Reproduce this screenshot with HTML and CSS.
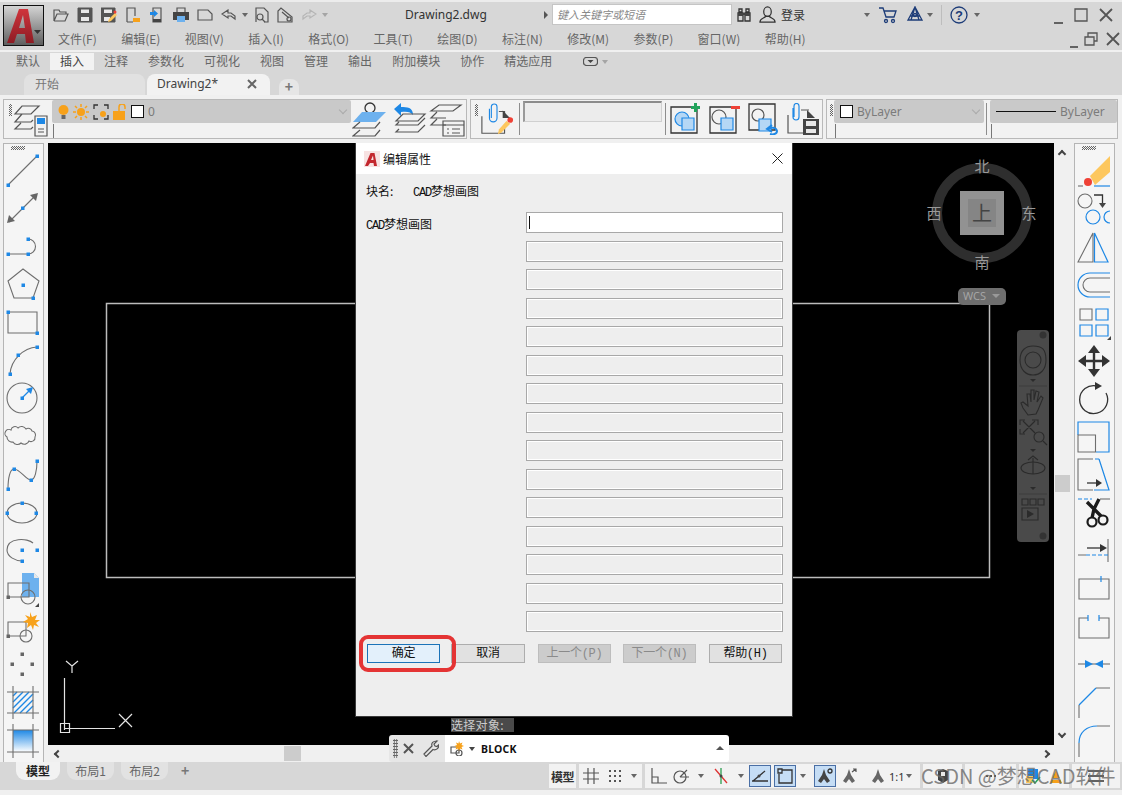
FILE: index.html
```html
<!DOCTYPE html>
<html lang="zh-CN">
<head>
    <meta charset="utf-8" />
    <title>Drawing2.dwg</title>
    <link rel="stylesheet" href="styles.css">
</head>
<body>
<div class="head">
    <div class="appbtn">
        <svg width="39" height="39" viewBox="0 0 39 39"><defs><linearGradient id="ared" x1="0" y1="0" x2="0" y2="1"><stop offset="0" stop-color="#d0343c"/><stop offset="1" stop-color="#8e1c24"/></linearGradient></defs><path fill="url(#ared)" d="M3 37 L15 3 H24 L30 37 H22 L21 28 H13 L10 37Z M15 22 H21 L19 9Z" fill-rule="evenodd"/><path class="tri" d="M30 24h7l-3.500 4z"/></svg>
    </div>
    <div class="headrows">
        <div class="titlerow">
            <div class="qat">
                <svg class="q" viewBox="0 0 16 16"><path class="d" d="M1 14V3h5l1 2h6v2M1 14h11l3-7H4l-3 7"/></svg>
                <svg class="q" viewBox="0 0 16 16"><path class="dk" d="M1 1h14v14H1z"/><path class="wf" d="M4 2.500h8v3.500H4zM4 10h8v4H4z"/></svg>
                <svg class="q" viewBox="0 0 16 16"><path class="dk" d="M0 1h14v14H0z"/><path class="wf" d="M3 2.500h8v3.500H3zM3 10h6v4H3z"/><path class="yf" d="M8 12l6-6 2 2-6 6-3 1z"/><circle class="rf" cx="14" cy="5" r="1.500"/></svg>
                <svg class="q" viewBox="0 0 16 16"><path class="d" d="M2 15V1h8v8M2 15h6"/><path class="of" d="M8 11h7v4H8z"/></svg>
                <svg class="q" viewBox="0 0 16 16"><path class="d" d="M4 1h8v14H4z"/><path class="bf" d="M1 5h4V3l4 3.500L5 10V8H1z"/><path class="dkf" d="M4 12h8v3H4z"/></svg>
                <svg class="q" viewBox="0 0 16 16"><path class="d" d="M4 5V1h8v4"/><path class="dkf" d="M0 5h16v8H0z"/><path class="lbf" d="M4 9h8v6H4z"/></svg>
                <svg class="q" viewBox="0 0 16 16"><path class="d" d="M1 3h10l4 4v6H1z"/></svg>
                <svg class="q" viewBox="0 0 16 16"><path class="d" d="M7 3L1 7l6 4V9h3l4 3V9L10 6H7z"/></svg>
                <span class="drop"></span>
                <svg class="q" viewBox="0 0 16 16"><path class="d" d="M3 15V1h8l4 4v10h-4"/><circle class="d" cx="7" cy="10" r="3"/><path class="d" d="M9 12l3 3"/></svg>
                <svg class="q" viewBox="0 0 16 16"><path class="d" d="M1 15V4l3-3 11 9v5z"/><path class="d" d="M5 5l7 6"/><circle class="d" cx="12" cy="12" r="2"/></svg>
                <svg class="q" viewBox="0 0 16 16"><path class="lt" d="M9 3l6 4-6 4V9H6L2 12V9l4-3h3z"/></svg>
                <span class="drop lite"></span>
                <span class="flow"></span>
            </div>
            <div class="docname">Drawing2.dwg</div>
            <span class="arrow-r"></span>
            <div class="search">键入关键字或短语</div>
            <svg class="binoc" viewBox="0 0 16 16"><path class="dk1" d="M3 2h3v3H3zM10 2h3v3h-3zM2 6h5v8H2zM9 6h5v8H9zM7 7h2"/><path class="dkf" d="M2 6h5v3H2zM9 6h5v3H9z"/></svg>
            <svg class="user" viewBox="0 0 18 18"><ellipse class="dk1" cx="9" cy="6" rx="4" ry="5"/><path class="dk1" d="M1 17c0-4 5-4 6-6h4c1 2 6 2 6 6z"/></svg>
            <span class="login">登录</span>
            <span class="drop login-drop"></span>
            <svg class="cart" viewBox="0 0 18 18"><path class="nv" d="M0 2h4l3 9h8l2-6H5"/><circle class="nv" cx="7" cy="15" r="1.500"/><circle class="nv" cx="14" cy="15" r="1.500"/></svg>
            <svg class="a360" viewBox="0 0 18 18"><path class="nv" d="M9 1l7 13H2z M9 1L5 14M9 1l4 13M4 10h10"/><circle class="nv" cx="9" cy="9" r="1.500"/></svg>
            <span class="drop a360-drop"></span>
            <span class="vsep"></span>
            <svg class="help" viewBox="0 0 18 18"><circle class="nv" cx="9" cy="9" r="8"/><text x="9" y="13.500" class="helpq">?</text></svg>
            <span class="drop help-drop"></span>
            <div class="winbtns">
                <svg viewBox="0 0 12 12" class="win-min"><path class="wb" d="M1 11h9"/></svg>
                <svg viewBox="0 0 14 14" class="win-max"><path class="wb1" d="M1 1h12v12H1z"/></svg>
                <svg viewBox="0 0 14 14" class="win-x"><path class="wb" d="M1 1l12 12M13 1L1 13"/></svg>
            </div>
        </div>
        <div class="menurow">
            <nav class="menu">
                <span>文件(F)</span><span>编辑(E)</span><span>视图(V)</span><span>插入(I)</span><span>格式(O)</span><span>工具(T)</span><span>绘图(D)</span><span>标注(N)</span><span>修改(M)</span><span>参数(P)</span><span>窗口(W)</span><span>帮助(H)</span>
            </nav>
            <div class="docbtns">
                <svg viewBox="0 0 12 12" class="doc-min"><path class="wb" d="M1 11h8"/></svg>
                <svg viewBox="0 0 14 14" class="doc-res"><path class="wb1" d="M1 5h9v8H1zM4 5V1h9v8h-3"/></svg>
                <svg viewBox="0 0 14 14" class="doc-x"><path class="wb" d="M1 1l12 12M13 1L1 13"/></svg>
            </div>
        </div>
    </div>
</div>

<div class="ribbontabs">
    <span>默认</span><span class="on">插入</span><span>注释</span><span>参数化</span><span>可视化</span><span>视图</span><span>管理</span><span>输出</span><span>附加模块</span><span>协作</span><span>精选应用</span>
    <span class="minbtn"><svg width="15" height="9" viewBox="0 0 15 9"><rect class="d" x=".5" y=".5" width="14" height="8" rx="3"/><path class="dkf" d="M4.500 3h6l-3 3z"/></svg><i class="drop lite"></i></span>
</div>
<div class="filetabs">
    <div class="ftab">开始</div>
    <div class="ftab active">Drawing2*<svg class="ftab-x" viewBox="0 0 10 10"><path d="M1 1l8 8M9 1L1 9"/></svg></div>
    <div class="ftab plus">+</div>
</div>

<div class="toolbars">
    <div class="panel layers">
        <span class="grip"></span>
        <svg class="tb-big" viewBox="0 0 36 36"><path class="d" d="M9 4h17l-8 8H2zM9 12l-7 8h16l2-2M8 21l-6 6h16l2-2"/><path class="d" d="M22 14h12v20H22z"/><path class="bf" d="M24 16h8v6h-8z"/><path class="d" d="M25 27h6M25 30h6"/></svg>
        <div class="combo-wrap layer-combo">
            <div class="combo">
                <svg width="11" height="18" viewBox="0 0 11 18"><circle class="of" cx="5.500" cy="7" r="5"/><path class="gf" d="M3.500 12h4v4h-4z"/></svg>
                <svg width="16" height="16" viewBox="0 0 16 16"><circle class="of" cx="8" cy="8" r="4"/><path class="os" d="M8 0v3M8 13v3M0 8h3M13 8h3M2 2l2 2M12 12l2 2M14 2l-2 2M2 14l2-2"/></svg>
                <svg width="16" height="16" viewBox="0 0 16 16"><path class="dk1" d="M1 5V1h4M11 1h4v4M15 11v4h-4M5 15H1v-4"/><circle class="of" cx="10" cy="10" r="3"/></svg>
                <svg width="14" height="16" viewBox="0 0 14 16"><path class="of" d="M0 7h12v9H0z"/><path class="os" d="M6 7V3a3 3 0 0 1 6 0v2"/></svg>
                <span class="swatch"></span>
                <span class="combo-t">0</span>
                <span class="chev"></span>
            </div>
            <div class="combo-foot"></div>
        </div>
        <svg class="tb-big" viewBox="0 0 36 36"><circle class="dk1" cx="18" cy="6" r="5"/><path class="lbf" d="M10 10h24l-10 10H1z"/><path class="d" d="M8 20l-7 6h22l5-6M8 28l-7 6h22l5-6"/></svg>
        <svg class="tb-big" viewBox="0 0 36 36"><path class="bf" d="M1 7l7-6v4c6 0 12 0 12 8-2-3-6-4-12-3v4z"/><path class="d" d="M10 12h22l-7 7H3zM6 20l-3 3h22l7-7M6 27l-3 3h22l7-7"/></svg>
        <svg class="tb-big" viewBox="0 0 36 36"><path class="d" d="M10 3h22l-8 6H2zM8 10l-6 6h15M8 17l-6 6h15"/><path class="d" d="M14 19h21v15H14z"/><path class="d" d="M14 23h21M18 27h2M23 27h8M18 31h2M23 31h8"/></svg>
    </div>
    <div class="panel refs">
        <span class="grip"></span>
        <svg class="tb-big clip" viewBox="0 0 36 36"><path class="b" d="M12 16V4a3 3 0 0 1 6 0v12a4 4 0 0 1-8 0V6"/><path class="d" d="M2 14v18h24V26M20 9h6v4"/><path class="dkf" d="M24 8l8 8h-8z"/><path class="yf" d="M20 28l8-9 4 3-9 9-4 2z"/><circle class="rf" cx="32" cy="18" r="3"/></svg>
        <span class="tbsep"></span>
        <div class="sunken"></div>
        <span class="tbsep"></span>
        <svg class="tb-mid first" viewBox="0 0 32 32"><path class="dk1" d="M1 4h26v26H1z"/><circle class="lbs" cx="12" cy="16" r="7"/><path class="lbs" d="M12 15h12v12H12z"/><path class="gnf" d="M24 0h3v3h3v3h-3v3h-3V6h-3V3h3z"/></svg>
        <svg class="tb-mid" viewBox="0 0 32 32"><path class="dk1" d="M1 4h26v26H1z"/><circle class="d" cx="10" cy="14" r="7"/><path class="lbs" d="M12 15h12v12H12z"/><path class="rf" d="M22 3h9v3h-9z"/></svg>
        <svg class="tb-mid" viewBox="0 0 32 32"><path class="dk1" d="M1 1h26v26H1z"/><circle class="d" cx="10" cy="12" r="6"/><path class="lbs" d="M11 16h12v12H11z"/><path class="bl2" d="M20 26c3-2 8-2 9 2 0 3-4 4-7 3M24 22l-5 4 5 3"/></svg>
        <svg class="tb-mid" viewBox="0 0 32 32"><path class="b" d="M7 14V3a2.500 2.500 0 0 1 5 0v11a3 3 0 0 1-6 0V5"/><path class="d" d="M1 12v18h15M14 7h8"/><path class="dkf" d="M20 7l8 8h-8z"/><path class="dkf" d="M16 16h16v16H16z"/><path class="wf" d="M19 18h10v5H19zM19 26h10v4H19z"/></svg>
    </div>
    <div class="panel props">
        <span class="grip"></span>
        <div class="combo-wrap color-combo">
            <div class="combo"><span class="swatch"></span><span class="combo-t">ByLayer</span><span class="chev"></span></div>
            <div class="combo-foot"></div>
        </div>
        <span class="tbsep"></span>
        <div class="combo-wrap line-combo">
            <div class="combo"><span class="ltline"></span><span class="combo-t">ByLayer</span></div>
            <div class="combo-foot"></div>
        </div>
    </div>
</div>

<div class="main">
    <div class="vbar">
        <span class="grip h"></span>
        <svg class="cell" viewBox="0 0 39 38"><path class="g" d="M4 33L33 4"/><path class="bf" d="M2.500 31.500h3.500v3.500h-3.500zM31.500 2.500h3.500v3.500h-3.500z"/></svg>
        <svg class="cell" viewBox="0 0 39 38"><path class="g" d="M5 32L32 5"/><path class="gf" d="M3 33l2-8 6 6zM34 3l-2 8-6-6z"/><path class="bf" d="M17 16.500h3.500v3.500h-3.500z"/></svg>
        <svg class="cell" viewBox="0 0 39 38"><path class="g" d="M4 26H24M24 11a7.500 7.500 0 0 1 0 15"/><path class="bf" d="M2.500 24.500h3.500v3.500h-3.500zM22.500 24.500h3.500v3.500h-3.500zM22.500 9.500h3.500v3.500h-3.500z"/></svg>
        <svg class="cell" viewBox="0 0 39 38"><path class="g" d="M19 3L35 15 29 32H10L4 15z"/><path class="bf" d="M17.500 17.500h3.500v3.500h-3.500zM27.500 30.500h3.500v3.500h-3.500z"/></svg>
        <svg class="cell" viewBox="0 0 39 38"><path class="g" d="M4 8H33V29H4z"/><path class="bf" d="M2.500 6.500h3.500v3.500h-3.500zM31.500 27.500h3.500v3.500h-3.500z"/></svg>
        <svg class="cell" viewBox="0 0 39 38"><path class="g" d="M6 32C7 18 19 6 33 5"/><path class="bf" d="M4.500 30.500h3.500v3.500h-3.500zM12.500 11.500h3.500v3.500h-3.500zM31.500 3.500h3.500v3.500h-3.500z"/></svg>
        <svg class="cell" viewBox="0 0 39 38"><circle class="g" cx="18" cy="18" r="15"/><path class="b" d="M18 18L26 10"/><path class="bf" d="M16.500 16.500h3.500v3.500h-3.500zM29 7l-2 7-5-5z"/></svg>
        <svg class="cell" viewBox="0 0 39 38"><path class="g" d="M7 12a4 4 0 0 1 7-2a5 5 0 0 1 8 1a4 4 0 0 1 6 2a4 4 0 0 1 3 6a4 4 0 0 1-6 4a5 5 0 0 1-8 2a5 5 0 0 1-8-1a5 5 0 0 1-6-5a4 4 0 0 1 4-7z"/></svg>
        <svg class="cell" viewBox="0 0 39 38"><path class="g" d="M4 33C4 22 6 13 10 13C16 13 22 24 27 24C31 24 33 14 33 5"/><path class="bf" d="M2.500 31.500h3.500v3.500h-3.500zM8.500 11.500h3.500v3.500h-3.500zM25.500 22.500h3.500v3.500h-3.500zM31.500 3.500h3.500v3.500h-3.500z"/></svg>
        <svg class="cell" viewBox="0 0 39 38"><ellipse class="g" cx="18" cy="19" rx="15" ry="10"/><path class="bf" d="M16.500 7.500h3.500v3.500h-3.500zM1.500 17.500h3.500v3.500h-3.500zM30.500 17.500h3.500v3.500h-3.500z"/></svg>
        <svg class="cell" viewBox="0 0 39 38"><path class="g" d="M29 11C24 6 3 5 3 18C3 25 12 29 18 29"/><path class="bf" d="M16.500 16.500h3.500v3.500h-3.500zM31.500 16.500h3.500v3.500h-3.500zM16.500 27.500h3.500v3.500h-3.500z"/></svg>
        <svg class="cell" viewBox="0 0 39 38"><path class="lbf" d="M18 3h12l5 5v19H18z"/><path class="wf" d="M30 3l5 5h-5z"/><path class="g" d="M4 13H25V27H4z"/><circle class="g" cx="24" cy="27" r="7"/><path class="gf" d="M2.500 25.500h3.500v3.500h-3.500z"/><path class="dkf" d="M35 33v4h-4z"/></svg>
        <svg class="cell" viewBox="0 0 39 38"><path class="g" d="M4 14H22V28H4z"/><circle class="g" cx="22" cy="28" r="6"/><path class="gf" d="M2.500 26.500h3.500v3.500h-3.500z"/><path class="of" d="M26 4l2 5 5-2-2 5 5 0-4 3 3 4-5-2-1 5-2-5-4 3 1-5-5-1 5-3-3-4 5 2z"/></svg>
        <svg class="cell" viewBox="0 0 39 38"><path class="gf" d="M16.500 6.500h3.500v3.500h-3.500zM6.500 16.500h3.500v3.500h-3.500zM26.500 16.500h3.500v3.500h-3.500zM16.500 26.500h3.500v3.500h-3.500z"/></svg>
        <svg class="cell" viewBox="0 0 39 38"><path class="hatch" d="M9 12L13 8M9 18L19 8M9 24L25 8M10 29L29 10M16 29L29 16M22 29L29 22"/><path class="g" d="M3 8H35M3 29H35M9 2V35M29 2V35"/></svg>
        <svg class="cell" viewBox="0 0 39 38"><defs><linearGradient id="grad" x1="0" y1="0" x2="0" y2="1"><stop offset="0" stop-color="#1e88e5"/><stop offset="1" stop-color="#fff"/></linearGradient></defs><path fill="url(#grad)" d="M9 8H29V30H9z"/><path class="g" d="M3 8H35M3 30H35M9 2V36M29 2V36"/></svg>
    </div>

    <div class="center">
        <div class="viewrow">
            <div class="canvas">
                <svg class="drawing" viewBox="0 0 1006 602"><path class="rectline" d="M58.500 160.500H941.500V434.500H58.500z"/><path class="ucs" d="M16.500 587V535M16.500 585.500H67M12.500 580.500h9v9h-9zM24 530v-7l-6-5M24 523l6-5M71 571l13 13M84 571l-13 13"/></svg>
                <div class="cube">
                    <div class="ring"></div>
                    <div class="face"><span>上</span></div>
                    <span class="dir n">北</span><span class="dir s">南</span><span class="dir w">西</span><span class="dir e">东</span>
                </div>
                <div class="wcs">WCS<i></i></div>
                <div class="navbar">
                    <svg width="32" height="212" viewBox="0 0 32 212"><circle class="nb-dot" cx="26" cy="5" r="3.500"/><path class="nb" d="M3 30c0-10 6-14 13-14 9 0 13 3 13 14 0 10-6 15-13 15S3 40 3 30z"/><circle class="nb" cx="16" cy="30" r="8"/><path class="nb-f" d="M13 49h6l-3 3z"/><path class="nb-l" d="M2 56h28"/><path class="nb" d="M6 78l-2-5 2-1 5 4-1-12 3 0 1 8V60h3v10l2-9 3 1-2 10 4-6 2 2-5 12-2 4-8 1z"/><path class="nb" d="M6 91l12 12M18 91L6 103M3 95v-5h5M15 90h6v5M3 99v5h5"/><circle class="nb" cx="22" cy="107" r="5"/><path class="nb" d="M26 111l4 4"/><path class="nb-f" d="M13 119h6l-3 3z"/><path class="nb" d="M16 128v16M11 130l5-4 5 4"/><ellipse class="nb" cx="16" cy="138" rx="12" ry="6"/><path class="nb-f" d="M13 157h6l-3 3z"/><path class="nb-l" d="M2 164h28"/><path class="nb" d="M5 169h6v6H5zM13 169h6v6h-6zM21 169h6v6h-6zM5 178h16v12H5z"/><path class="nb-f" d="M10 180l7 4-7 4z"/><circle class="nb-dot" cx="26" cy="206" r="3.500"/></svg>
                </div>
            </div>
            <div class="vscroll">
                <i class="chevron up"></i><span class="vthumb"></span><i class="chevron down"></i>
            </div>
        </div>
        <div class="hscroll">
            <i class="chevron left"></i><span class="hthumb"></span><i class="chevron right"></i>
        </div>

        <div class="dialog">
            <div class="dlg-title">
                <svg width="16" height="16" viewBox="0 0 16 16"><path class="pale" d="M0 0h16v16H0z"/><path class="rf2" d="M1 15L6.500 2h4L13 15h-3l-.500-3H6l-2 3zM7 9h2.500L9 4.500z" fill-rule="evenodd"/></svg>
                <span>编辑属性</span>
                <svg class="dlg-x" viewBox="0 0 11 11"><path d="M.5.5l10 10M10.500.5l-10 10"/></svg>
            </div>
            <div class="dlg-body">
                <div class="blockname"><span class="lbl">块名:</span><span><span class="lat">CAD</span>梦想画图</span></div>
                <div class="fields">
                    <div class="flabel"><span class="lat">CAD</span>梦想画图</div>
                    <div class="inputs">
                        <div class="field cur"><i></i></div>
                        <div class="field"></div><div class="field"></div><div class="field"></div><div class="field"></div>
                        <div class="field"></div><div class="field"></div><div class="field"></div><div class="field"></div>
                        <div class="field"></div><div class="field"></div><div class="field"></div><div class="field"></div>
                        <div class="field"></div><div class="field"></div>
                    </div>
                </div>
                <div class="btns">
                    <button class="btn ok">确定</button>
                    <button class="btn cancel">取消</button>
                    <button class="btn off">上一个(P)</button>
                    <button class="btn off next">下一个(N)</button>
                    <button class="btn">帮助(H)</button>
                </div>
            </div>
            <div class="redbox"></div>
        </div>

        <div class="prompt">选择对象:</div>
        <div class="cmdline">
            <div class="cmd-left">
                <span class="cmd-grip"></span>
                <svg width="11" height="11" viewBox="0 0 11 11"><path class="cmdx" d="M1 1l9 9M10 1l-9 9"/></svg>
                <svg class="wrench" width="16" height="17" viewBox="0 0 16 17"><path class="d" d="M1 14l8-8c-1-3 1-5 5-5l-3 3 1 2 2 .500 2-2c0 4-3 6-6 5l-7 7z"/></svg>
            </div>
            <div class="cmd-main">
                <svg width="15" height="15" viewBox="0 0 15 15"><path class="d" d="M1 6h8v6H1z"/><circle class="d" cx="9" cy="12" r="3"/><path class="of" d="M9 0l1 2.500 2.500-1-1 2.500 2.500 1-2.500 1 1 2.500-2.500-1-1 2.500-1-2.500-2.500 1 1-2.500L4.500 5 7 4 6 1.500l2.500 1z"/></svg>
                <span class="drop dark"></span>
                <span class="cmd-text">BLOCK</span>
                <span class="cmd-up"></span>
            </div>
        </div>
    </div>

    <div class="vbar right">
        <span class="grip h"></span>
        <svg class="cell" viewBox="0 0 39 38"><path class="yf" d="M15 24L35 4V20L20 33z"/><circle class="rf" cx="13" cy="30" r="4"/><path class="g" d="M3 34H8"/><path class="b" d="M19 34H35"/></svg>
        <svg class="cell" viewBox="0 0 39 38"><circle class="g" cx="10" cy="11" r="7"/><path class="dk1" d="M19 5H27.500V13"/><path class="dkf" d="M24 13h7l-3.500 5z"/><circle class="b" cx="18" cy="27" r="7"/><path class="b" d="M35 33a6 6 0 1 1 0-12"/></svg>
        <svg class="cell" viewBox="0 0 39 38"><path class="g" d="M3 34L18 5V34z"/><path class="b" d="M19.500 5L33 34H19.500z"/></svg>
        <svg class="cell" viewBox="0 0 39 38"><path class="b" d="M35 7H15a12 12 0 0 0 0 24H35"/><path class="g" d="M35 12H15a7 7 0 0 0 0 14H35"/></svg>
        <svg class="cell" viewBox="0 0 39 38"><path class="g" d="M5 5H17V16H5z"/><path class="b" d="M21 5H33V16H21zM5 21H17V32H5zM21 21H33V32H21z"/><path class="dkf" d="M36 32v4h-4z"/></svg>
        <svg class="cell" viewBox="0 0 39 38"><path class="thick" d="M19 6V32M6 19H32"/><path class="dkf2" d="M19 3l6 8H13zM19 35l6-8H13zM3 19l8-6v12zM35 19l-8-6v12z"/></svg>
        <svg class="cell" viewBox="0 0 39 38"><path class="dk1" d="M22 6A14 14 0 1 0 31 13"/><path class="dkf2" d="M20 2v8l7-4z"/></svg>
        <svg class="cell" viewBox="0 0 39 38"><path class="b" d="M3 17V4H34V34H21"/><path class="g" d="M3 17H20.500V34H3z"/></svg>
        <svg class="cell" viewBox="0 0 39 38"><path class="g" d="M18 3H3V34H18"/><path class="b" d="M24 3L34 34H19M20 3H24"/><path class="dk1" d="M12 27H22"/><path class="dkf2" d="M21 23l6 4-6 4z"/></svg>
        <svg class="cell" viewBox="0 0 39 38"><path class="dash" d="M3 5H17"/><path class="g" d="M25 5H35"/><path class="sc" d="M12 8L26 22M24 5L19 15L17 24"/><circle class="sc2" cx="17" cy="28" r="4.500"/><circle class="sc2" cx="28" cy="26" r="4.500"/></svg>
        <svg class="cell" viewBox="0 0 39 38"><path class="g" d="M33 7V30M3 23H11"/><path class="dash" d="M11 23H33"/><path class="dk1" d="M12 16H26"/><path class="dkf2" d="M25 12l7 4-7 4z"/></svg>
        <svg class="cell" viewBox="0 0 39 38"><path class="g" d="M26 9H34V29H4V9H26"/><path class="b" d="M26 6V12"/></svg>
        <svg class="cell" viewBox="0 0 39 38"><path class="g" d="M13 10H4V30H34V10H24"/><path class="b" d="M13 7V13M24 7V13"/></svg>
        <svg class="cell" viewBox="0 0 39 38"><path class="g" d="M3 18H35"/><path class="bf" d="M10 14l8 4-8 4zM28 14l-8 4 8 4z"/></svg>
        <svg class="cell" viewBox="0 0 39 38"><path class="b" d="M4 21L21 4"/><path class="g" d="M21 4H35M4 21V34"/></svg>
        <svg class="cell" viewBox="0 0 39 38"><path class="b" d="M4 21C4 10 12 4 22 4"/><path class="g" d="M22 4H35M4 21V35"/></svg>
    </div>
</div>

<div class="statusrow">
    <div class="ltabs">
        <span class="ltab on">模型</span><span class="ltab">布局1</span><span class="ltab">布局2</span><span class="ltab-add">+</span>
    </div>
    <div class="sbar">
        <div class="sbox model">模型</div>
        <div class="sbox s-grid">
            <svg class="si" viewBox="0 0 16 16"><path class="d" d="M5 0v16M11 0v16M0 5h16M0 11h16"/></svg>
            <svg class="si" viewBox="0 0 16 16"><path class="dots" d="M2 2h2v2H2zM7 2h2v2H7zM12 2h2v2h-2zM2 7h2v2H2zM7 7h2v2H7zM12 7h2v2h-2zM2 12h2v2H2zM7 12h2v2H7zM12 12h2v2h-2z"/></svg>
            <span class="drop"></span>
        </div>
        <div class="sbox s-draft">
            <svg class="si" viewBox="0 0 16 16"><path class="d" d="M1 0v15h15M1 9h6v6"/></svg>
            <svg class="si" viewBox="0 0 16 16"><circle class="d" cx="7" cy="9" r="6"/><path class="d" d="M7 9l7-7M7 9h9"/></svg>
            <span class="drop"></span>
            <svg class="si" viewBox="0 0 16 16"><path class="rl" d="M2 1l12 14"/><path class="gl" d="M8 0v16"/><circle class="dkf" cx="8" cy="8" r="1.500"/></svg>
            <span class="drop"></span>
            <span class="sbtn s1"><svg class="si" viewBox="0 0 16 16"><path class="dk1" d="M0 13h16M1 13L13 3"/><circle class="dkf" cx="7" cy="8" r="1.500"/></svg></span>
            <span class="sbtn s2"><svg class="si" viewBox="0 0 16 16"><path class="dk1" d="M5 2h10v13H2V6"/><path class="dk1" d="M1 1h4v4H1z"/></svg></span>
            <span class="drop"></span>
            <span class="sbtn anno"><svg class="si" viewBox="0 0 16 16"><path class="dkf" d="M7 1l2 6 4 6-3 2-3-4-3 4-3-2 4-6z"/><circle class="dk1" cx="13" cy="3" r="2"/></svg></span>
            <svg class="si" viewBox="0 0 16 16"><path class="gf" d="M7 1l2 6 4 6-3 2-3-4-3 4-3-2 4-6z"/><path class="d" d="M10 4l4-3M11 1h3v3"/></svg>
            <svg class="si anno3" viewBox="0 0 16 16"><path class="gf" d="M8 1l2 6 4 6-3 2-3-4-3 4-3-2 4-6z"/></svg>
            <span class="scale">1:1</span>
            <span class="drop"></span>
        </div>
        <div class="sbox s-tail">
            <svg class="si" viewBox="0 0 16 16"><path class="dkf" d="M3 3l5-2 5 2v9l-5 3-5-3z"/><path class="wf" d="M6 4h4v4H6z"/></svg>
        </div>
        <div class="sbox s-mid">
            <svg class="si" viewBox="0 0 16 16"><path class="dots" d="M3 7h2v2H3zM7 7h2v2H7zM11 7h2v2h-2z"/></svg>
        </div>
        <div class="sbox s-tail2">
            <svg class="si" viewBox="0 0 16 16"><path class="bf" d="M3 1h10v10H3z"/><path class="yf" d="M1 8h7v7H1z"/><path class="gn" d="M7 12l3 3 5-6"/></svg>
            <svg class="si" viewBox="0 0 16 16"><path class="of" d="M8 2l6 13H2z"/><path class="wf" d="M4 10h8v2H4z"/></svg>
        </div>
        <div class="sbox s-menu"><svg class="si" viewBox="0 0 16 16"><path class="dk1" d="M0 3h16M0 8h16M0 13h16"/></svg></div>
    </div>
    <div class="watermark">CSDN @梦想CAD软件</div>
</div>
</body>
</html>
```
FILE: styles.css
```css
* { box-sizing: border-box; }
html, body { margin: 0; padding: 0; }
body {
    width: 1122px; height: 795px; overflow: hidden;
    background: #f0f0f0; color: #555;
    font: 12px "Noto Sans CJK SC", "Noto Sans", sans-serif;
    border-top: 2px solid #ececec;
    position: relative;
}
svg { display: block; flex: none; }
i { display: block; }

/* shared icon paints */
.d { fill: none; stroke: #555; stroke-width: 1.2; }
.dk { fill: #555; stroke: #555; }
.dk1 { fill: none; stroke: #333; stroke-width: 1.3; }
.dkf { fill: #444; }
.dkf2 { fill: #333; }
.wf { fill: #e8e8e8; }
.yf { fill: #fdc75e; }
.rf { fill: #ef4136; }
.of { fill: #f7a11a; }
.os { fill: none; stroke: #f7a11a; stroke-width: 1.5; }
.bf { fill: #1e88e5; }
.lbf { fill: #6db1ee; }
.lbs { fill: #b5d7f5; stroke: #1e88e5; stroke-width: 1.2; }
.gf { fill: #666; }
.gnf { fill: #22a35b; }
.gn { fill: none; stroke: #22a35b; stroke-width: 1.5; }
.lt { fill: none; stroke: #b5b5b5; stroke-width: 1.2; }
.nv { fill: none; stroke: #1d3c78; stroke-width: 1.3; }
.g { fill: none; stroke: #6e6e6e; stroke-width: 1.1; }
.b { fill: none; stroke: #1e88e5; stroke-width: 1.2; }
.bl2 { fill: none; stroke: #1e88e5; stroke-width: 2; }
.dash { fill: none; stroke: #1e88e5; stroke-width: 1.2; stroke-dasharray: 4 2; }
.hatch { fill: none; stroke: #1e88e5; stroke-width: 1.4; }
.thick { fill: none; stroke: #333; stroke-width: 2.4; }
.sc { fill: none; stroke: #1b1b1b; stroke-width: 3.4; }
.sc2 { fill: none; stroke: #1b1b1b; stroke-width: 2.2; }
.dots { fill: #555; }
.rl { fill: none; stroke: #d33; stroke-width: 1.3; }
.gl { fill: none; stroke: #2a9d4f; stroke-width: 1.3; }
.pale { fill: #f7e2e2; }
.rf2 { fill: #c3272e; }
.tri { fill: #333; }

.drop {
    display: inline-block; width: 0; height: 0; flex: none;
    border-left: 3.5px solid transparent; border-right: 3.5px solid transparent;
    border-top: 4px solid #666;
}
.drop.lite { border-top-color: #a5a5a5; }
.drop.dark { border-top-color: #444; }

/* title + menu rows */
.head { display: flex; height: 48px; background: #d7d7d7; padding-left: 3px; }
.appbtn {
    width: 41px; height: 41px; margin-top: 3px; flex: none;
    border: 1px solid #111;
    background: linear-gradient(#d4d4d4, #5f5f5f);
}
.headrows { flex: 1; min-width: 0; }
.titlerow { display: flex; align-items: center; height: 25px; position: relative; }
.qat { display: flex; align-items: center; gap: 8px; margin-left: 9px; width: 328px; height: 25px; flex: none; }
.q { width: 16px; height: 16px; }
.qat .drop { margin: 0 -3px; }
.docname { margin-left: 24px; font-size: 12px; font-family: "Noto Sans", sans-serif; color: #333; width: 132px; flex: none; }
.arrow-r { width: 0; height: 0; margin-left: 7px; border-left: 4px solid #555; border-top: 4px solid transparent; border-bottom: 4px solid transparent; flex: none; }
.search {
    width: 180px; height: 21px; margin-left: 4px; padding-left: 4px; flex: none;
    background: #fff; border: 1px solid #c5c5c5;
    font-size: 11px; font-style: italic; color: #888; line-height: 19px;
}
.binoc { width: 16px; height: 16px; margin-left: 4px; }
.user { width: 17px; height: 17px; margin-left: 7px; }
.login { margin-left: 5px; color: #333; width: 83px; flex: none; }
.login-drop { margin-left: 0; }
.cart { width: 18px; height: 18px; margin-left: 9px; }
.a360 { width: 18px; height: 18px; margin-left: 9px; }
.a360-drop { margin-left: 3px; }
.vsep { width: 1px; height: 20px; background: #bdbdbd; margin-left: 8px; flex: none; }
.help { width: 18px; height: 18px; margin-left: 8px; }
.helpq { font: bold 13px "Liberation Sans", sans-serif; text-anchor: middle; fill: #1d3c78; }
.help-drop { margin-left: 6px; }
.winbtns { display: flex; align-items: center; margin-left: 73px; }
.win-min { width: 12px; height: 12px; margin-top: 6px; }
.win-max { width: 14px; height: 14px; margin-left: 9px; }
.win-x { width: 14px; height: 14px; margin-left: 11px; }
.wb { fill: none; stroke: #555; stroke-width: 1.8; }
.wb1 { fill: none; stroke: #555; stroke-width: 1.3; }
.menurow { display: flex; align-items: center; height: 23px; position: relative; }
.menu { display: flex; gap: 24.4px; margin-left: 14px; color: #666; width: 1011px; flex: none; }
.docbtns { display: flex; align-items: center; margin-left: 0; }
.doc-min { width: 12px; height: 12px; margin-top: 6px; }
.doc-res { width: 14px; height: 14px; margin-left: 3px; }
.doc-x { width: 14px; height: 14px; margin-left: 8px; }

/* ribbon */
.ribbontabs {
    display: flex; align-items: flex-end; height: 23px;
    background: #d7d7d7; padding-left: 6px;
    border-top: 2px solid #f0f0f0; color: #666;
}
.ribbontabs span { padding: 0 10px; height: 17px; line-height: 16px; margin-bottom: 3px; }
.ribbontabs .on { background: #f2f2f2; color: #444; }
.ribbontabs .minbtn { display: flex; align-items: center; gap: 4px; margin-left: 11px; padding: 0 10px; }
.filetabs { display: flex; align-items: flex-end; height: 22px; padding-left: 24px; background: #d7d7d7; }
.ftab {
    width: 121px; height: 21px; padding-left: 11px; line-height: 20px;
    background: #e1e1e1; color: #777;
    border-radius: 8px 8px 0 0;
}
.ftab.active {
    width: 123px; padding-left: 10px; margin-left: 2px;
    background: #f2f2f2; color: #444;
    font-family: "Noto Sans", sans-serif; position: relative;
}
.ftab-x { position: absolute; right: 13px; top: 5px; width: 10px; height: 10px; fill: none; stroke: #666; stroke-width: 2; }
.ftab.plus {
    width: 20px; height: 16px; margin-left: 9px; padding: 0;
    text-align: center; line-height: 15px; font-weight: bold; font-size: 14px;
    background: #e6e6e6; color: #777;
}

/* toolbars */
.toolbars { display: flex; height: 40px; margin-top: 4px; padding-left: 3px; gap: 3px; }
.panel {
    display: flex; height: 40px; flex: none;
    background: #f2f2f2; border: 1px solid #b9b9b9;
    position: relative;
}
.grip {
    width: 3px; height: 12px; margin: 4px 1px 0 3px; flex: none;
    background: repeating-conic-gradient(#666 0 25%, transparent 0 50%) 0 0 / 2px 2px;
}
.grip.h { display: block; width: 14px; height: 4px; margin: 2px 0 2px 7px; }
.tb-big { width: 36px; height: 36px; margin: 2px 0 0 0; }
.layers { width: 464px; padding-left: 2px; }
.layer-combo { width: 299px; margin: 0 1px 0 3px; flex: none; }
.layer-combo + .tb-big { margin-right: 5px; }
.combo-wrap { height: 100%; }
.combo {
    display: flex; align-items: center; gap: 4px; height: 23px; padding: 0 6px;
    background: #c9c9c9; border-radius: 2px; color: #7b7b7b; position: relative;
}
.combo-foot { margin: 1px 0 0 1px; height: 14px; border-left: 1px solid #777; }
.swatch { width: 13px; height: 13px; background: #fff; border: 1px solid #111; flex: none; }
.combo-t { font: 12px "Noto Sans", sans-serif; color: #7b7b7b; }
.chev {
    position: absolute; right: 5px; top: 7px; width: 6px; height: 6px;
    border-right: 1px solid #aaa; border-bottom: 1px solid #aaa; transform: rotate(45deg);
}
.refs { width: 353px; padding-left: 1px; }
.refs .clip { width: 34px; height: 34px; margin: 3px 5px 0 1px; }
.tbsep { width: 1px; height: 32px; background: #8d8d8d; margin-top: 3px; flex: none; }
.sunken { width: 139px; height: 21px; margin: 1px 3px 0 3px; flex: none; background: #ececec; border: 1px solid #d0d0d0; border-top: 2px solid #8c8c8c; border-left: 2px solid #9a9a9a; }
.tb-mid { width: 32px; height: 32px; margin: 3px 3px 0 4px; }
.props { flex: 1; margin-right: 5px; }
.color-combo { width: 150px; margin: 0 2px 0 0; flex: none; }
.line-combo { width: 127px; margin: 0 0 0 3px; flex: none; }
.ltline { width: 60px; height: 1px; background: #111; flex: none; }

/* main area */
.main { display: flex; height: 619px; margin-top: 4px; padding-left: 3px; position: relative; }
.vbar { width: 41px; height: 619px; background: #f5f5f5; border: 1px solid #b5b5b5; border-width: 1px 1px 0; flex: none; }
.vbar.right { margin-left: 4px; }
.cell { width: 39px; height: 38px; overflow: visible; }
.center { width: 1022px; margin-left: 4px; flex: none; position: relative; }
.viewrow { display: flex; height: 602px; }
.canvas { width: 1006px; height: 602px; background: #000; position: relative; overflow: hidden; }
.drawing { position: absolute; left: 0; top: 0; width: 1006px; height: 602px; }
.rectline { fill: none; stroke: #bcbcbc; stroke-width: 1.5; }
.ucs { fill: none; stroke: #e4e4e4; stroke-width: 1.2; }

.cube { position: absolute; left: 878px; top: 15px; width: 112px; height: 112px; }
.ring { position: absolute; left: 6px; top: 5px; width: 100px; height: 100px; border: 10px solid #2e2e2e; border-radius: 50%; }
.face {
    position: absolute; left: 34px; top: 33px; width: 44px; height: 44px;
    background: #929292; padding: 8px;
}
.face span {
    display: block; width: 28px; height: 28px; background: #858585;
    color: #444; font-size: 20px; line-height: 27px; text-align: center;
}
.dir { position: absolute; color: #999; font-size: 15px; line-height: 18px; width: 18px; text-align: center; }
.dir.n { left: 47px; top: -1px; }
.dir.s { left: 47px; top: 95px; }
.dir.w { left: -1px; top: 46px; }
.dir.e { left: 94px; top: 46px; }
.wcs {
    position: absolute; left: 910px; top: 145px; width: 48px; height: 17px;
    background: #6e6e6e; border-radius: 5px; padding-left: 5px;
    color: #a5a5a5; font: 11px/16px "Noto Sans", sans-serif;
}
.wcs i {
    position: absolute; right: 6px; top: 6px;
    border-left: 4px solid transparent; border-right: 4px solid transparent; border-top: 4px solid #999;
}
.navbar { position: absolute; left: 969px; top: 187px; width: 32px; height: 212px; background: #4a4a4a; border-radius: 4px; }
.nb { fill: none; stroke: #2b2b2b; stroke-width: 1.1; }
.nb-l { fill: none; stroke: #3c3c3c; stroke-width: 1; }
.nb-f { fill: #2b2b2b; }
.nb-dot { fill: #333; }

.vscroll { width: 16px; height: 602px; position: relative; background: #f0f0f0; }
.vthumb { position: absolute; left: 1px; top: 332px; width: 15px; height: 17px; background: #ccc; }
.hscroll { height: 17px; position: relative; background: #f0f0f0; }
.hthumb { position: absolute; left: 236px; top: 1px; width: 17px; height: 15px; background: #ccc; }
.chevron {
    position: absolute; width: 6px; height: 6px;
    border: solid #444; border-width: 2px 0 0 2px;
}
.chevron.up { left: 5px; top: 8px; transform: rotate(45deg); }
.chevron.down { left: 5px; top: 588px; transform: rotate(225deg); }
.chevron.left { left: 7px; top: 6px; transform: rotate(-45deg); }
.chevron.right { left: 995px; top: 6px; transform: rotate(135deg); }

/* dialog */
.dialog {
    position: absolute; left: 307px; top: 0; width: 438px; height: 574px;
    background: #eee; border: solid #3a3a3a; border-width: 0 1px 1px; color: #111;
    font-family: "Noto Sans CJK SC", sans-serif;
}
.dlg-title {
    display: flex; align-items: center; gap: 3px; height: 31px; padding-left: 8px;
    background: #fff; position: relative;
}
.dlg-x { position: absolute; right: 9px; top: 10px; width: 11px; height: 11px; fill: none; stroke: #222; stroke-width: 1; }
.dlg-body { padding: 0 9px 0 10px; }
.lat { font: 12px "Liberation Mono", monospace; letter-spacing: -1.2px; }
.blockname { display: flex; height: 17px; margin-top: 8px; line-height: 17px; }
.blockname .lbl { width: 47px; }
.fields { display: flex; margin-top: 13px; }
.flabel { width: 160px; line-height: 17px; margin-top: 3px; }
.inputs { display: grid; gap: 7.5px; width: 257px; }
.field {
    height: 21px; border: 1px solid #a8a8a8; background: #eee;
    box-shadow: inset 0 0 0 1px #fff;
}
.field.cur { background: #fff; box-shadow: none; padding: 3px 2px; }
.field.cur i { width: 1px; height: 13px; background: #111; }
.btns { display: flex; margin: 12px 0 0 1px; }
.btn {
    height: 19px; width: 73px; padding: 0; margin: 0 13px 0 0; flex: none;
    background: #e1e1e1; border: 1px solid #adadad; color: #111;
    font: 12px/16px "Liberation Mono", "Noto Sans CJK SC", monospace; letter-spacing: -.3px;
}
.btn.ok { background: #e3f0fb; border-color: #1b73b8; margin-right: 11px; }
.btn.cancel { width: 74px; }
.btn.off { background: #ccc; border-color: #bdbdbd; color: #8a8a8a; margin-right: 12px; }
.btn.off.next { margin-right: 13px; }
.btn:last-child { margin-right: 0; }
.redbox {
    position: absolute; left: 3px; top: 492px; width: 97px; height: 37px;
    border: 4px solid #e43434; border-radius: 9px;
}

.prompt {
    position: absolute; left: 403px; top: 575px; width: 63px; height: 14px;
    background: #4a4a4a; color: #ccc; line-height: 14px; letter-spacing: 0.3px; white-space: nowrap;
}
.cmdline {
    position: absolute; left: 341px; top: 592px; width: 340px; height: 27px;
    display: flex; border-radius: 3px; overflow: hidden;
}
.cmd-left { display: flex; align-items: center; width: 56px; background: #e6e6e6; padding-left: 4px; gap: 5px; flex: none; }
.cmd-grip { width: 5px; height: 19px; flex: none; background: radial-gradient(circle, #666 1px, transparent 1.1px) 0 0 / 2.500px 3px; }
.cmdx { fill: none; stroke: #555; stroke-width: 2; }
.wrench { margin-left: 4px; }
.cmd-main { flex: 1; display: flex; align-items: center; gap: 4px; padding-left: 5px; background: #fff; position: relative; }
.cmd-text { font: bold 10.500px "Noto Sans", sans-serif; color: #111; margin-left: 2px; letter-spacing: .2px; }
.cmd-up {
    position: absolute; right: 5px; top: 11px;
    border-left: 4px solid transparent; border-right: 4px solid transparent; border-bottom: 4px solid #555;
}

/* bottom */
.statusrow { display: flex; height: 28px; background: #d7d7d7; position: relative; }
.ltabs { display: flex; width: 549px; padding-left: 16px; height: 18px; flex: none; }
.ltab { width: 47px; height: 18px; text-align: center; line-height: 17px; color: #666; background: #e2e2e2; border-radius: 0 0 9px 9px; margin-right: 7px; }
.ltab.on { background: #f2f2f2; color: #222; font-weight: bold; width: 44px; }
.ltab-add { font-size: 14px; font-weight: bold; color: #777; margin-left: 6px; line-height: 16px; }
.sbar { display: flex; gap: 3px; padding-top: 2px; height: 26px; }
.sbox { display: flex; align-items: center; gap: 8px; height: 24px; background: #f2f2f2; padding: 0 4px; flex: none; }
.si { width: 16px; height: 16px; }
.model { width: 27px; padding: 0; font-weight: bold; color: #333; justify-content: center; letter-spacing: -.5px; }
.s-grid { width: 63px; }
.s-draft { width: 275px; gap: 6px; padding-left: 6px; }
.s-draft .drop { margin: 0 3px; }
.sbtn {
    display: flex; align-items: center; justify-content: center;
    width: 22px; height: 22px; background: #c5ddf5; border: 1px solid #4a6fa5; flex: none;
}
.s1 { margin-left: -4px; }
.s2 { margin-left: -3px; }
.s-draft .s2 + .drop { margin-left: -2px; }
.anno { margin-left: -1px; }
.anno3 { margin-left: 6px; }
.scale { font: 11px "Noto Sans", sans-serif; color: #333; margin-left: -3px; width: 14px; flex: none; white-space: nowrap; }
.s-draft .scale + .drop { margin-left: -3px; }
.s-tail { width: 39px; justify-content: center; }
.s-mid { width: 51px; justify-content: center; }
.s-tail2 { width: 50px; justify-content: space-around; padding: 0 2px; gap: 0; }
.s-menu { width: 48px; justify-content: center; }
.watermark {
    position: absolute; left: 921px; top: 1px; white-space: nowrap;
    font-size: 20px; line-height: 26px; color: rgba(105, 105, 105, .8);
}
```
